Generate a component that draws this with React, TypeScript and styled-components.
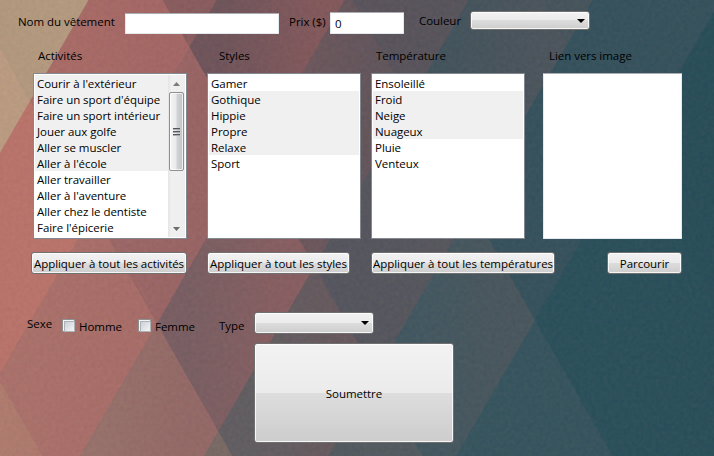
import React from "react";
import styled, { createGlobalStyle } from "styled-components";

const GlobalStyle = createGlobalStyle`
  * { box-sizing: border-box; }
  body { margin: 0; overflow: hidden; }
  button, input { font: inherit; color: inherit; letter-spacing: inherit; }
`;

const Window = styled.main`
  position: relative;
  isolation: isolate;
  width: 714px;
  height: 456px;
  overflow: hidden;
  background: #33515d;
  color: #000;
  font: 11.5px/16px "Open Sans", "Noto Sans", sans-serif;
  letter-spacing: -0.04px;
`;

const Wallpaper = styled.svg`
  position: absolute;
  inset: 0;
  z-index: -1;
`;

const Row = styled.div<{ $height: number }>`
  display: flex;
  align-items: flex-start;
  height: ${(p) => p.$height}px;
`;

const Label = styled.label<{ $left?: number; $top?: number; $width: number }>`
  flex: none;
  width: ${(p) => p.$width}px;
  margin-left: ${(p) => p.$left ?? 0}px;
  margin-top: ${(p) => p.$top ?? 0}px;
  white-space: nowrap;
`;

const TextInput = styled.input<{ $width: number; $height: number; $left: number; $top: number }>`
  flex: none;
  width: ${(p) => p.$width}px;
  height: ${(p) => p.$height}px;
  margin: ${(p) => p.$top}px 0 0 ${(p) => p.$left}px;
  padding: 1px 4px 0;
  border: 1px solid #e3e9ef;
  border-top-color: #abadb3;
  border-radius: 1px;
  background: #fff;
  outline: none;
`;

const chrome = `
  border: 1px solid #707070;
  border-radius: 3px;
  background: linear-gradient(#f2f2f2, #ebebeb 50%, #dddddd 50%, #cdcdcd);
  box-shadow: inset 0 0 0 1px rgba(255, 255, 255, 0.8);
`;

const PushButton = styled.button<{ $width: number; $height?: number; $left: number }>`
  ${chrome}
  display: flex;
  flex: none;
  align-items: center;
  justify-content: center;
  width: ${(p) => p.$width}px;
  height: ${(p) => p.$height ?? 22}px;
  margin: 0 0 0 ${(p) => p.$left}px;
  padding: 1px 0 0;
  white-space: nowrap;
`;

const Combo = styled.button<{ $height: number; $left: number; $top: number }>`
  ${chrome}
  display: flex;
  flex: none;
  align-items: center;
  justify-content: flex-end;
  width: 120px;
  height: ${(p) => p.$height}px;
  margin: ${(p) => p.$top}px 0 0 ${(p) => p.$left}px;
  padding: 0 4px 0 0;
`;

const ListFrame = styled.div<{ $width: number; $left: number; $light?: boolean }>`
  display: flex;
  flex: none;
  width: ${(p) => p.$width}px;
  height: 166px;
  margin-left: ${(p) => p.$left}px;
  padding: 1px;
  border: 1px solid ${(p) => (p.$light ? "#e3e9ef" : "#828790")};
  border-top-color: ${(p) => (p.$light ? "#abadb3" : "#828790")};
  border-radius: ${(p) => (p.$light ? 1 : 0)}px;
  background: #fff;
`;

const Items = styled.ul`
  flex: 1;
  margin: 0;
  padding: 0;
  list-style: none;
`;

const Item = styled.li<{ $selected: boolean }>`
  height: 16px;
  padding: 1px 0 0 2px;
  line-height: 16px;
  white-space: nowrap;
  background: ${(p) => (p.$selected ? "#f0f0f0" : "transparent")};
`;

const ScrollBar = styled.div`
  display: flex;
  flex-direction: column;
  align-items: center;
  width: 17px;
  background: linear-gradient(90deg, #e5e5e5, #f0f0f0 20%, #eeeeee);
`;

const ScrollArrow = styled.div`
  display: flex;
  align-items: center;
  justify-content: center;
  height: 17px;
`;

const ScrollThumb = styled.div`
  display: flex;
  flex-direction: column;
  align-items: center;
  justify-content: center;
  gap: 1px;
  width: 15px;
  height: 79px;
  border: 1px solid #8f8f8f;
  border-radius: 2px;
  background: linear-gradient(90deg, #f5f5f5, #e9e9eb 48%, #d2d3d6 52%, #c2c3c8);
  box-shadow: inset 0 0 0 1px rgba(255, 255, 255, 0.7);
`;

const Grip = styled.span`
  width: 7px;
  height: 2px;
  border-top: 1px solid #55575c;
  background: #a9abb0;
`;

const Spacer = styled.div`
  flex: 1;
`;

const CheckBox = styled.span`
  flex: none;
  width: 13px;
  height: 13px;
  margin-top: 7px;
  padding: 1px;
  border: 1px solid #8e8f8f;
  background: #f4f4f4;

  &::before {
    content: "";
    display: block;
    width: 9px;
    height: 9px;
    border: 1px solid #aeb3b9;
    background: linear-gradient(135deg, #cbcfd5, #f6f6f6);
  }
`;

const LOWER = [-400, 89, 217, 345, 469, 593, 721, 1200];
const UPPER = [-500, -217, -27, 163, 353, 543, 1000];

/* Fills of the facets: [band between falling-left lines, band between falling-right lines, left, right]. */
const FACETS: [number, number, string, string][] = [
  [0, 1, "#c0a287", "#bd9d82"],
  [0, 2, "#b0967c", "#b69b80"],
  [1, 0, "#bd7c6e", "#bd7c6e"],
  [1, 1, "#bb736a", "#bc756c"],
  [1, 2, "#ab6c67", "#a66866"],
  [1, 3, "#8b5d5f", "#8b5d5f"],
  [2, 0, "#b98473", "#b07b6e"],
  [2, 1, "#ac726b", "#aa6e69"],
  [2, 2, "#9e6767", "#996464"],
  [2, 3, "#70555b", "#84595c"],
  [3, 1, "#99726c", "#956a67"],
  [3, 2, "#7a5f63", "#895f62"],
  [3, 3, "#71585d", "#62565c"],
  [3, 4, "#5a545c", "#58555c"],
  [4, 1, "#7a6a65", "#7a6a65"],
  [4, 2, "#625e62", "#68595e"],
  [4, 3, "#56565f", "#57575e"],
  [4, 4, "#43545d", "#4c555d"],
  [4, 5, "#47555d", "#47555d"],
  [5, 2, "#535b60", "#535b60"],
  [5, 3, "#425861", "#4a575e"],
  [5, 4, "#36525d", "#36525d"],
  [5, 5, "#36525d", "#36525d"],
  [6, 2, "#37555f", "#37555f"],
  [6, 3, "#37555f", "#36535e"],
  [6, 4, "#2b505b", "#294e59"],
  [6, 5, "#294e59", "#294e59"],
];

const corner = (u: number, v: number) =>
  `${((0.57 * u + 0.58 * v) / 1.15).toFixed(1)},${((u - v) / 1.15).toFixed(1)}`;

function Background() {
  return (
    <Wallpaper width="714" height="456" aria-hidden="true">
      <defs>
        {FACETS.map(([i, j, from, to]) => (
          <linearGradient key={`${i}${j}`} id={`facet${i}${j}`}>
            <stop offset="0.2" stopColor={from} />
            <stop offset="0.8" stopColor={to} />
          </linearGradient>
        ))}
        <filter id="grain" x="0" y="0" width="100%" height="100%" colorInterpolationFilters="sRGB">
          <feTurbulence type="fractalNoise" baseFrequency="0.25" numOctaves="3" seed="4" />
          <feColorMatrix values="1.4 0 0 0 -0.3  0.7 0.7 0 0 -0.3  0.7 0 0.7 0 -0.3  0 0 0 0 1" />
        </filter>
      </defs>
      {FACETS.map(([i, j]) => {
        const points = [
          corner(LOWER[i], UPPER[j]),
          corner(LOWER[i + 1], UPPER[j]),
          corner(LOWER[i + 1], UPPER[j + 1]),
          corner(LOWER[i], UPPER[j + 1]),
        ].join(" ");
        return (
          <polygon key={`${i}${j}`} points={points} fill={`url(#facet${i}${j})`} stroke={`url(#facet${i}${j})`} strokeWidth="0.8" />
        );
      })}
      <rect width="714" height="456" filter="url(#grain)" opacity="0.035" />
    </Wallpaper>
  );
}

function Triangle({ up = false, width = 8, color = "#000" }: { up?: boolean; width?: number; color?: string }) {
  return (
    <svg width={width} height="4" viewBox="0 0 8 4" preserveAspectRatio="none">
      <path d={up ? "M0 4L4 0L8 4Z" : "M0 0H8L4 4Z"} fill={color} />
    </svg>
  );
}

type Entry = [text: string, selected: boolean];

const ACTIVITIES: Entry[] = [
  ["Courir à l'extérieur", true],
  ["Faire un sport d'équipe", true],
  ["Faire un sport intérieur", true],
  ["Jouer aux golfe", true],
  ["Aller se muscler", true],
  ["Aller à l'école", true],
  ["Aller travailler", false],
  ["Aller à l'aventure", false],
  ["Aller chez le dentiste", false],
  ["Faire l'épicerie", false],
];

const STYLES: Entry[] = [
  ["Gamer", false],
  ["Gothique", true],
  ["Hippie", true],
  ["Propre", true],
  ["Relaxe", true],
  ["Sport", false],
];

const WEATHER: Entry[] = [
  ["Ensoleillé", false],
  ["Froid", true],
  ["Neige", true],
  ["Nuageux", true],
  ["Pluie", false],
  ["Venteux", false],
];

function ListBox({ entries, left, scroll }: { entries: Entry[]; left: number; scroll?: boolean }) {
  return (
    <ListFrame $width={154} $left={left}>
      <Items>
        {entries.map(([text, selected]) => (
          <Item key={text} $selected={selected}>
            {text}
          </Item>
        ))}
      </Items>
      {scroll && (
        <ScrollBar>
          <ScrollArrow>
            <Triangle up width={7} color="#7b7b7b" />
          </ScrollArrow>
          <ScrollThumb>
            <Grip />
            <Grip />
            <Grip />
          </ScrollThumb>
          <Spacer />
          <ScrollArrow>
            <Triangle width={7} color="#6b6b6b" />
          </ScrollArrow>
        </ScrollBar>
      )}
    </ListFrame>
  );
}

export default function App() {
  return (
    <Window>
      <GlobalStyle />
      <Background />
      <Row $height={48}>
        <Label $left={18} $top={14} $width={107}>Nom du vêtement</Label>
        <TextInput $width={154} $height={21} $left={0} $top={13} aria-label="Nom du vêtement" />
        <Label $left={10} $top={14} $width={41}>Prix ($)</Label>
        <TextInput $width={74} $height={22} $left={0} $top={12} defaultValue="0" aria-label="Prix" />
        <Label $left={15} $top={13} $width={51}>Couleur</Label>
        <Combo $height={19} $left={0} $top={11} aria-label="Couleur">
          <Triangle />
        </Combo>
      </Row>
      <Row $height={25}>
        <Label $left={38} $width={181}>Activités</Label>
        <Label $width={157}>Styles</Label>
        <Label $width={173}>Température</Label>
        <Label $width={100}>Lien vers image</Label>
      </Row>
      <Row $height={179}>
        <ListBox entries={ACTIVITIES} left={33} scroll />
        <ListBox entries={STYLES} left={20} />
        <ListBox entries={WEATHER} left={10} />
        <ListFrame $width={139} $left={18} $light />
      </Row>
      <Row $height={60}>
        <PushButton $left={31} $width={156}>Appliquer à tout les activités</PushButton>
        <PushButton $left={20} $width={143}>Appliquer à tout les styles</PushButton>
        <PushButton $left={21} $width={184}>Appliquer à tout les températures</PushButton>
        <PushButton $left={52} $width={75}>Parcourir</PushButton>
      </Row>
      <Row $height={31}>
        <Label $left={27} $top={4} $width={35}>Sexe</Label>
        <CheckBox />
        <Label $left={4} $top={7} $width={59}>Homme</Label>
        <CheckBox />
        <Label $left={4} $top={7} $width={64}>Femme</Label>
        <Label $top={6} $width={36}>Type</Label>
        <Combo $height={22} $left={-1} $top={0} aria-label="Type">
          <Triangle />
        </Combo>
      </Row>
      <Row $height={100}>
        <PushButton $left={254} $width={200} $height={100}>Soumettre</PushButton>
      </Row>
    </Window>
  );
}
